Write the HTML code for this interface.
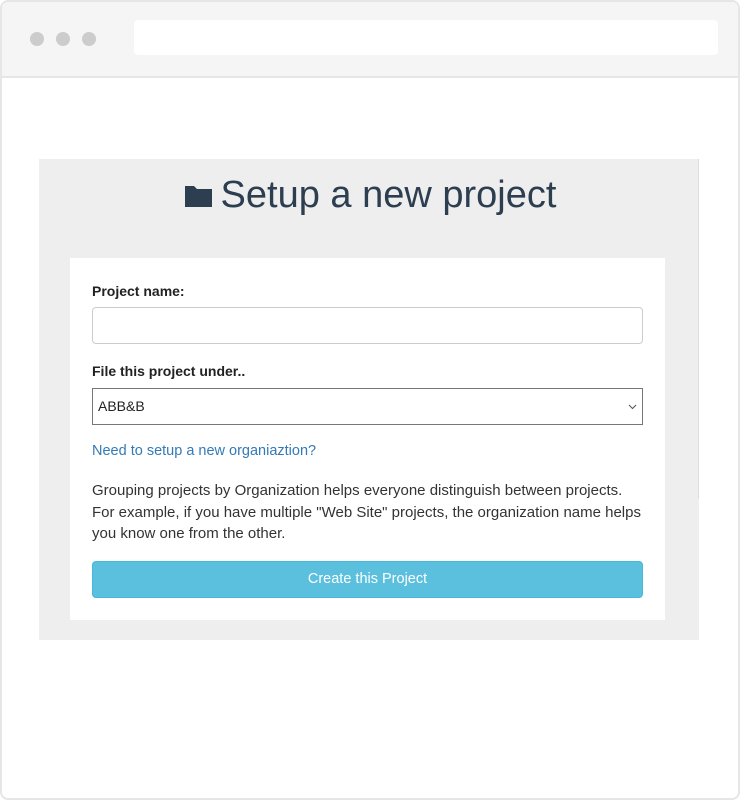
<!DOCTYPE html>
<html><head><style>
body{margin:0;width:740px;height:800px;background:#fff;font-family:"Liberation Sans",sans-serif;position:relative;overflow:hidden}
.frame{position:absolute;left:0;top:0;width:736px;height:796px;border:2px solid #e6e6e6;border-radius:8px}
.bar{position:absolute;left:2px;top:2px;width:736px;height:74px;background:#f5f5f5;border-bottom:2px solid #e6e6e6;border-radius:6px 6px 0 0}
.dot{position:absolute;top:32px;width:14px;height:14px;border-radius:50%;background:#ccc}
.addr{position:absolute;left:134px;top:20px;width:584px;height:35px;background:#fff;border-radius:4px}
.panel{position:absolute;left:39px;top:159px;width:660px;height:481px;background:#eee}
.card{position:absolute;left:70px;top:258px;width:595px;height:362px;background:#fff}
.title{position:absolute;left:0;top:174px;width:740px;text-align:center;font-size:38px;color:#2c3e50}
.lbl{position:absolute;left:92px;font-size:14px;font-weight:bold;color:#222}
.inp{position:absolute;left:92px;border:1px solid #ccc;border-radius:4px;box-sizing:border-box;width:551px;height:37px}
.sel{position:absolute;left:92px;top:388px;width:551px;height:37px;border:1px solid #777;box-sizing:border-box;font-size:14px;color:#222;line-height:35px;padding-left:5px}
.txt{position:absolute;left:92px;font-size:14px;color:#333;line-height:21.5px;width:580px}
.btn{position:absolute;left:92px;top:561px;width:551px;height:37px;box-sizing:border-box;background:#5bc0de;border:1px solid #46b8da;border-radius:4px;color:#fff;text-align:center;line-height:35px;font-size:14.5px}
</style></head><body>
<div class="frame"></div>
<div class="bar"></div>
<div class="dot" style="left:30px"></div><div class="dot" style="left:56px"></div><div class="dot" style="left:82px"></div>
<div class="addr"></div>
<div class="panel"></div>
<div style="position:absolute;left:698px;top:159px;width:1px;height:340px;background:#ddd"></div>
<div class="card"></div>
<div class="title"><svg width="29" height="24" viewBox="0 0 29 24" style="vertical-align:-1px;margin-right:8px"><path d="M1 2h9l3 3h15v18H1z" fill="#2c3e50"/></svg>Setup a new project</div>
<div class="lbl" style="top:283px">Project name:</div>
<div class="inp" style="top:307px"></div>
<div class="lbl" style="top:363px">File this project under..</div>
<div class="sel">ABB&amp;B<svg style="position:absolute;right:5px;top:15px" width="9" height="6" viewBox="0 0 9 6"><path d="M1 1l3.5 3.5L8 1" stroke="#555" fill="none"/></svg></div>
<div class="txt" style="top:441px;color:#337ab7;font-size:14.5px">Need to setup a new organiaztion?</div>
<div class="txt" style="top:480px;font-size:15px">Grouping projects by Organization helps everyone distinguish between projects.<br>For example, if you have multiple "Web Site" projects, the organization name helps<br>you know one from the other.</div>
<div class="btn">Create this Project</div>
</body></html>
